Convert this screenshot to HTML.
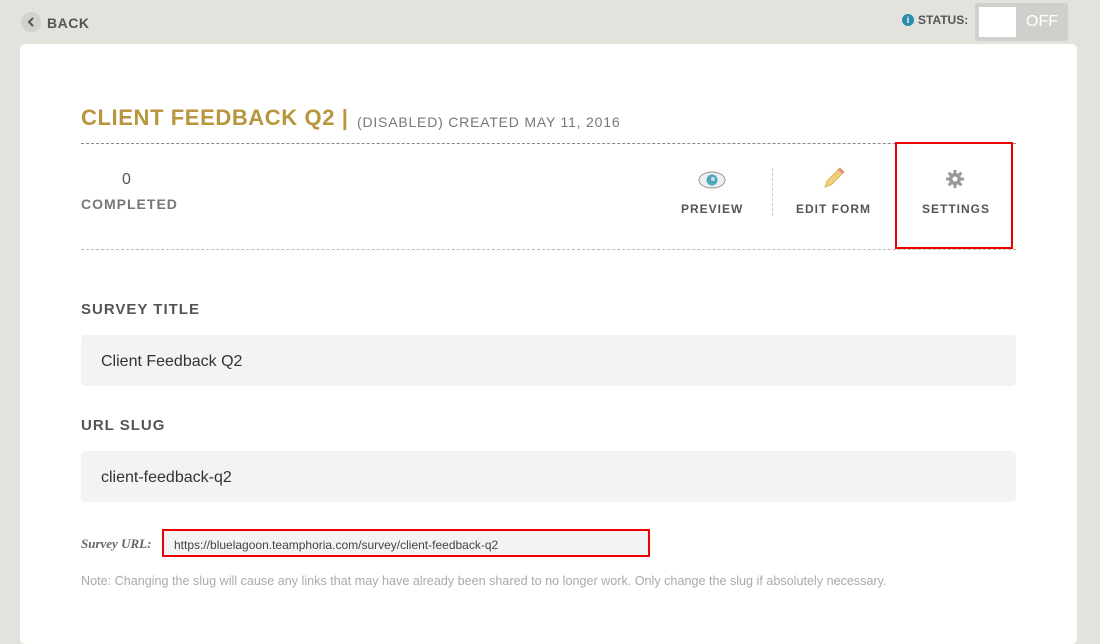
<!DOCTYPE html>
<html><head><meta charset="utf-8"><style>
*{margin:0;padding:0;box-sizing:border-box}
body{width:1100px;height:613px;background:#e3e2dd;font-family:"Liberation Sans",sans-serif;position:relative;overflow:hidden}
.a{position:absolute;white-space:nowrap}
.card{position:absolute;left:20px;top:44px;width:1057px;height:600px;background:#fff;border-radius:5px}
.lbl{font-weight:bold;color:#555;font-size:15px;letter-spacing:1px}
.field{position:absolute;left:81px;width:935px;height:51px;background:#f3f3f3;border-radius:4px;font-size:16px;color:#333;padding:18px 0 0 20px}
.act{font-weight:bold;font-size:12px;color:#555;letter-spacing:1px}
</style></head><body>
<div class="a" style="left:21px;top:12px;width:20px;height:20px;border-radius:50%;background:#d2d1cc"></div>
<svg class="a" style="left:21px;top:12px" width="20" height="20"><path d="M12 6 L8 10 L12 14" stroke="#555" stroke-width="2" fill="none"/></svg>
<div class="a" style="left:47px;top:15px;font-size:14px;font-weight:bold;color:#555;letter-spacing:.5px">BACK</div>
<div class="a" style="left:902px;top:14px;width:12px;height:12px;border-radius:50%;background:#2b8cb0;color:#fff;font-size:9px;font-weight:bold;text-align:center;line-height:12px">i</div>
<div class="a" style="left:918px;top:13px;font-size:12px;font-weight:bold;color:#555">STATUS:</div>
<div class="a" style="left:975px;top:3px;width:93px;height:38px;background:#cfcfcc;border-radius:3px"></div>
<div class="a" style="left:979px;top:7px;width:37px;height:30px;background:#fff"></div>
<div class="a" style="left:1026px;top:13px;font-size:16px;color:#fff">OFF</div>
<div class="card"></div>
<div class="a" style="left:81px;top:105px;font-size:22px;font-weight:bold;color:#b8963e;letter-spacing:.6px">CLIENT FEEDBACK Q2 |</div>
<div class="a" style="left:357px;top:114px;font-size:14px;color:#777;letter-spacing:.8px">(DISABLED) CREATED MAY 11, 2016</div>
<div class="a" style="left:81px;top:143px;width:935px;border-top:1px dashed #888"></div>
<div class="a" style="left:81px;top:249px;width:935px;border-top:1px dashed #bbb"></div>
<div class="a" style="left:122px;top:171px;font-size:16px;color:#555">0</div>
<div class="a act" style="left:81px;top:196px;font-size:14px;color:#777">COMPLETED</div>
<svg class="a" style="left:697px;top:170px" width="30" height="20"><ellipse cx="15" cy="10" rx="13" ry="8" fill="#eee" stroke="#999"/><circle cx="15" cy="10" r="5.5" fill="#4aa6b8"/><circle cx="16" cy="9" r="2" fill="#cde"/></svg>
<div class="a act" style="left:681px;top:202px">PREVIEW</div>
<div class="a" style="left:772px;top:168px;height:48px;border-left:1px dashed #ccc"></div>
<svg class="a" style="left:822px;top:166px" width="24" height="24"><path d="M3 21 L5 15 L18 2 L22 6 L9 19 Z" fill="#f1d27a" stroke="#d7b35a"/><path d="M18 2 L22 6 L20 8 L16 4Z" fill="#e88"/></svg>
<div class="a act" style="left:796px;top:202px">EDIT FORM</div>
<svg class="a" style="left:946px;top:170px" width="18" height="18" viewBox="0 0 18 18"><g fill="#999"><circle cx="9" cy="9" r="6"/><rect x="7.5" y="0" width="3" height="18"/><rect x="0" y="7.5" width="18" height="3"/><rect x="7.5" y="0" width="3" height="18" transform="rotate(45 9 9)"/><rect x="7.5" y="0" width="3" height="18" transform="rotate(-45 9 9)"/></g><circle cx="9" cy="9" r="2.5" fill="#fff"/></svg>
<div class="a act" style="left:922px;top:202px">SETTINGS</div>
<div class="a" style="left:895px;top:142px;width:118px;height:107px;border:2px solid #e00"></div>
<div class="a lbl" style="left:81px;top:301px">SURVEY TITLE</div>
<div class="field" style="top:335px">Client Feedback Q2</div>
<div class="a lbl" style="left:81px;top:417px">URL SLUG</div>
<div class="field" style="top:451px">client-feedback-q2</div>
<div class="a" style="left:81px;top:536px;font-family:'Liberation Serif',serif;font-style:italic;font-weight:bold;font-size:13px;color:#666">Survey URL:</div>
<div class="a" style="left:162px;top:529px;width:488px;height:28px;background:#f3f3f3;border:2px solid #e00;font-size:12px;color:#444;padding:7px 0 0 10px">https://bluelagoon.teamphoria.com/survey/client-feedback-q2</div>
<div class="a" style="left:81px;top:574px;font-size:12.6px;color:#aaa">Note: Changing the slug will cause any links that may have already been shared to no longer work. Only change the slug if absolutely necessary.</div>
</body></html>
